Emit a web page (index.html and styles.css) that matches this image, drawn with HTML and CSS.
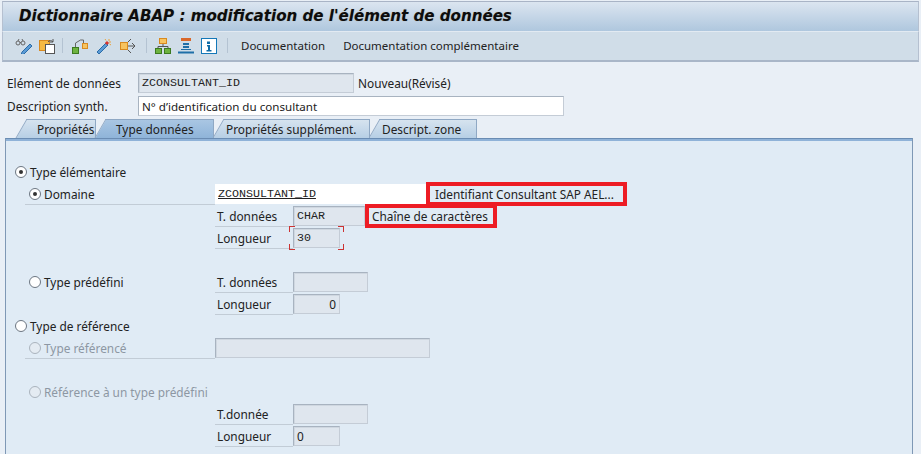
FILE: index.html
```html
<!DOCTYPE html>
<html lang="fr">
<head>
<meta charset="utf-8">
<title>Dictionnaire ABAP</title>
<link rel="stylesheet" href="styles.css">
</head>
<body>
<div class="window">
  <header class="titlebar"><h1>Dictionnaire ABAP : modification de l'élément de données</h1></header>
  <nav class="toolbar">
    <svg class="icon" viewBox="0 0 18 16"><g fill="none" stroke="#666" stroke-width="1"><circle cx="3" cy="5" r="2"/><circle cx="8" cy="5" r="2"/><path d="M5 4.500h1M3 3l1-2M8 3l-1-2"/></g><path d="M7 14l8-8 2 2-8 8-3 1z" fill="#5b9bd5" stroke="#2b6ca8"/></svg>
    <svg class="icon i2" viewBox="0 0 16 16"><rect x="0.500" y="2.500" width="10" height="10" fill="#f5b942" stroke="#d98a1f"/><rect x="6.500" y="6.500" width="9" height="9" fill="#fff" stroke="#555"/><path d="M9 4a3 3 0 0 1 5 0M14 1v3h-3" fill="none" stroke="#555"/></svg>
    <i class="sep s1"></i>
    <svg class="icon i3" viewBox="0 0 16 16"><rect x="0.500" y="9.500" width="6" height="6" fill="#6db33f" stroke="#3c7a1f"/><rect x="10.500" y="5.500" width="5" height="5" fill="#f7c35f" stroke="#d98a1f"/><path d="M3.500 9V5l5-3h3v3" fill="none" stroke="#666"/></svg>
    <svg class="icon i4" viewBox="0 0 16 16"><path d="M1 14l9-9 2 2-9 9z" fill="#5b9bd5" stroke="#2b6ca8"/><rect x="9.500" y="3.500" width="3" height="3" fill="#d9342b" transform="rotate(45 11 5)"/><path d="M13 1v2M15 4h-2M15 7l-1.500-1M9 1l1 1.500" stroke="#e9a23b"/></svg>
    <svg class="icon i5" viewBox="0 0 16 16"><rect x="0.500" y="4.500" width="7" height="7" fill="#f7c35f" stroke="#d98a1f"/><path d="M8 8h7M12 5l3 3-3 3M8 4l3-3M8 12l3 3" fill="none" stroke="#555"/></svg>
    <i class="sep s2"></i>
    <svg class="icon i6" viewBox="0 0 16 16"><rect x="4.500" y="0.500" width="7" height="5" fill="#f7c35f" stroke="#d98a1f"/><path d="M8 6v3M3 11V8.500h10V11" fill="none" stroke="#555"/><rect x="0.500" y="10.500" width="6" height="5" fill="#6db33f" stroke="#3c7a1f"/><rect x="9.500" y="10.500" width="6" height="5" fill="#6db33f" stroke="#3c7a1f"/></svg>
    <svg class="icon i7" viewBox="0 0 16 16"><path d="M3 1.500h10" stroke="#d9682b" stroke-width="3"/><path d="M5 6h6M5 9h6" stroke="#1f6fa8" stroke-width="2"/><path d="M3 11.500h10" stroke="#1f6fa8" stroke-width="1"/><path d="M0 14.500h16" stroke="#1f6fa8" stroke-width="2"/></svg>
    <svg class="icon i8" viewBox="0 0 16 16"><rect x="0.500" y="0.500" width="15" height="15" fill="#fff" stroke="#1478b8"/><path d="M6 3.500h3v2.500H6zM6 7h3v5h1.500v1.500h-5V12H7V8.500H6z" fill="#0f6ca8"/></svg>
    <i class="sep s3"></i>
    <span class="tool-link l1">Documentation</span>
    <span class="tool-link l2">Documentation complémentaire</span>
  </nav>
  <section class="head">
    <div class="head-row">
      <label class="head-label">Elément de données</label>
      <span class="field mono ro w-name">ZCONSULTANT_ID</span>
      <span class="status">Nouveau(Révisé)</span>
    </div>
    <div class="head-row">
      <label class="head-label">Description synth.</label>
      <span class="field edit w-desc desc-text">N° d’identification du consultant</span>
    </div>
  </section>
  <div class="tabs">
    <span class="tab t1">Propriétés</span>
    <span class="tab t2">Type données</span>
    <span class="tab t3">Propriétés supplément.</span>
    <span class="tab t4">Descript. zone</span>
  </div>
  <main class="panel">
    <div class="row lvl1"><i class="radio on"></i><span>Type élémentaire</span></div>
    <div class="row lvl2">
      <span class="opt ruled"><i class="radio on"></i><span>Domaine</span></span>
      <span class="field edit mono big w-dom">ZCONSULTANT_ID</span>
      <span class="mark m1">Identifiant Consultant SAP AEL...</span>
    </div>
    <div class="row fld"><label class="flabel">T. données</label><span class="field mono ro w-type">CHAR</span>
      <span class="mark m2">Chaîne de caractères</span></div>
    <div class="row fld"><label class="flabel">Longueur</label><span class="req"><span class="field mono ro w-len">30</span></span></div>
    <div class="row"></div>
    <div class="row lvl2"><span class="opt"><i class="radio"></i><span>Type prédéfini</span></span><label class="flabel">T. données</label><span class="field ro w-type2"></span></div>
    <div class="row fld"><label class="flabel">Longueur</label><span class="field ro w-len right">0</span></div>
    <div class="row lvl1"><i class="radio"></i><span>Type de référence</span></div>
    <div class="row lvl2 off"><span class="opt ruled"><i class="radio"></i><span>Type référencé</span></span><span class="field ro w-ref"></span></div>
    <div class="row"></div>
    <div class="row lvl2 off"><span class="opt opt-wide"><i class="radio"></i><span>Référence à un type prédéfini</span></span></div>
    <div class="row fld"><label class="flabel">T.donnée</label><span class="field ro w-type2"></span></div>
    <div class="row fld"><label class="flabel">Longueur</label><span class="field ro w-len">0</span></div>
  </main>
</div>
</body>
</html>
```
FILE: styles.css
```css
* { box-sizing: border-box; }
html, body { margin: 0; height: 100%; }
body {
  width: 921px; height: 454px; overflow: hidden;
  background: #e9eff6;
  font-family: "Noto Sans", sans-serif;
  font-size: 11.85px; color: #222;
}
.window { display: flex; flex-direction: column; height: 454px; }
.titlebar {
  height: 32px; margin: 1px 2px 0 2px; padding-left: 16px;
  border-top: 1px solid #a9b4c6; border-left: 1px solid #b5c0d0; border-right: 1px solid #b5c0d0;
  background: linear-gradient(#dbe5f0, #afc7de);
  display: flex; align-items: center;
}
.titlebar h1 {
  margin: 0; font-family: "DejaVu Sans", sans-serif; font-size: 15.1px; font-weight: bold; font-style: italic; color: #0d0d0d;
  text-shadow: 0 0 1px rgba(120,90,30,.35);
}
.toolbar {
  height: 33px; margin: 0 2px; padding-left: 12px;
  background: #d0dde8; border-top: 1px solid #e2eaf2; border-bottom: 2px solid #a9b6c8;
  border-left: 1px solid #b5c0d0; border-right: 1px solid #b5c0d0;
  display: flex; align-items: center;
}
.icon { width: 18px; height: 16px; flex: none; }
.i2, .i3, .i4, .i5, .i6, .i7, .i8 { width: 16px; }
.i2 { margin-left: 6px; }
.sep { width: 1px; height: 15px; background: #b4c3d2; flex: none; }
.s1 { margin: 0 9px 0 7px; }
.i4, .i5 { margin-left: 8px; }
.s2 { margin: 0 8px 0 10px; }
.i7, .i8 { margin-left: 7px; }
.s3 { margin: 0 13px 0 10px; }
.tool-link { white-space: nowrap; font-size: 11.5px; }
.l2 { margin-left: 18px; }
.head { padding: 11px 0 0 7px; display: flex; flex-direction: column; gap: 2px; }
.head-row { height: 21px; display: flex; align-items: center; }
.head-label { width: 131px; flex: none; }
.status { margin-left: 4px; }
.desc-text { font-size: 11.6px; }
.field {
  display: flex; align-items: center; height: 20px; padding: 0 3px; flex: none;
  border: 1px solid #a8b3c0; border-bottom-color: #c4ccd6; border-right-color: #c4ccd6;
  white-space: nowrap; overflow: hidden;
}
.ro { background: #dfe6ee; box-shadow: inset 1px 1px 0 #cfd7e0; }
.edit { background: #fff; }
.mono { font-family: "Liberation Mono", monospace; font-size: 11.67px; }
.big { text-decoration: underline; border: 0; }
.w-name { width: 216px; }
.w-desc { width: 426px; }
.tabs { height: 23px; padding-left: 17px; display: flex; align-items: flex-end; }
.tab {
  position: relative; height: 19px; display: flex; align-items: center;
  background: linear-gradient(#d6e3ef, #b7cfe5);
  border-top: 1px solid #8fa8c4; border-right: 1px solid #8fa8c4;
  margin-left: 10px;
}
.tab::before {
  content: ""; position: absolute; left: -6px; top: -1px; bottom: 0; width: 12px;
  background: inherit; border-left: 1px solid #8fa8c4; border-top: 1px solid #8fa8c4;
  transform: skewX(-30deg); z-index: -1;
}
.t1 { width: 69px; padding-left: 10px; }
.t2 { width: 108px; padding-left: 10px; background: linear-gradient(#a9c6e3, #8fb4d9); z-index: 1; }
.t3 { width: 146px; padding-left: 2px; }
.t4 { width: 97px; padding-left: 2px; }
.panel {
  width: 908px; height: 316px; margin-left: 5px; padding-top: 22px;
  background: #e0ebf5; border: 1px solid #7f98b5; border-top: 1px solid #6a8cb3;
  border-bottom: 0; box-shadow: inset 0 2px 0 #8fb2d8;
  overflow: hidden; flex: none;
}
.row { height: 22px; display: flex; align-items: center; flex: none; }
.lvl1 { padding-left: 9px; }
.lvl2 { padding-left: 19px; }
.fld { padding-left: 209px; }
.opt {
  width: 190px; height: 21px; flex: none; padding-left: 4px; display: flex; align-items: center;
  border-bottom: 1px solid transparent;
}
.opt-wide { width: 300px; }
.ruled { border-bottom-color: #c2ccd6; }
.radio {
  width: 12px; height: 12px; border-radius: 50%; flex: none; margin-right: 3px;
  border: 1px solid #6c7682; background: #fff; display: flex; align-items: center; justify-content: center;
}
.radio.on::after { content: ""; width: 4px; height: 4px; background: #333; border-radius: 50%; }
.flabel { width: 78px; flex: none; padding-left: 2px; border-bottom: 1px solid #c2ccd6; line-height: 20px; height: 21px; }
.w-dom { width: 211px; }
.mark { border: 4px solid #ed1c24; background: #e0ebf5; height: 24px; display: flex; align-items: center; flex: none; white-space: nowrap; }
.m1 { width: 201px; padding-left: 5px; }
.m2 { width: 132px; padding-left: 3px; }
.w-type { width: 72px; }
.w-type2 { width: 75px; }
.w-len { width: 47px; }
.w-ref { width: 215px; }
.right { justify-content: flex-end; }
.req {
  display: flex; padding: 2px 4px; margin-left: -4px;
  background:
    linear-gradient(#c33,#c33) 0 0/6px 1px no-repeat,
    linear-gradient(#c33,#c33) 0 0/1px 6px no-repeat,
    linear-gradient(#c33,#c33) 100% 0/6px 1px no-repeat,
    linear-gradient(#c33,#c33) 100% 0/1px 6px no-repeat,
    linear-gradient(#c33,#c33) 0 100%/6px 1px no-repeat,
    linear-gradient(#c33,#c33) 0 100%/1px 6px no-repeat,
    linear-gradient(#c33,#c33) 100% 100%/6px 1px no-repeat,
    linear-gradient(#c33,#c33) 100% 100%/1px 6px no-repeat;
}
.off { color: #8d97a3; }
.off .radio { border-color: #aab3bd; background: #e4ebf2; }
```
